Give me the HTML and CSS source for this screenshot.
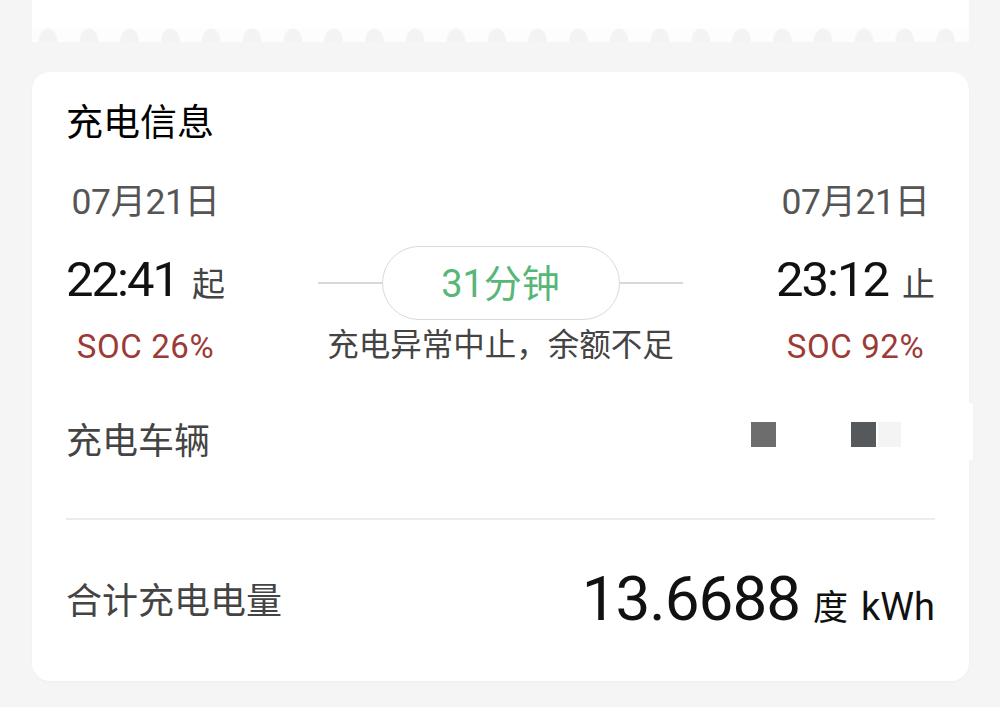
FILE: index.html
```html
<!DOCTYPE html>
<html lang="zh-CN">
<head>
<meta charset="utf-8">
<title>充电信息</title>
<link rel="stylesheet" href="styles.css">
</head>
<body>
<div class="page">
  <div class="ticket"></div>

  <section class="card">
    <h2 class="title">充电信息</h2>

    <div class="session">
      <div class="endpoint">
        <div class="date">07月21日</div>
        <div class="time">22:41<span class="tag">起</span></div>
        <div class="soc">SOC 26%</div>
      </div>

      <div class="middle">
        <div class="duration">
          <span class="rule"></span>
          <span class="pill">31分钟</span>
          <span class="rule"></span>
        </div>
        <div class="reason">充电异常中止，余额不足</div>
      </div>

      <div class="endpoint">
        <div class="date">07月21日</div>
        <div class="time">23:12<span class="tag">止</span></div>
        <div class="soc">SOC 92%</div>
      </div>
    </div>

    <div class="vehicle">
      <span class="label">充电车辆</span>
      <span class="plate">
        <span class="blk blk-a"></span>
        <span class="blk blk-b"></span>
        <span class="blk blk-c"></span>
      </span>
    </div>

    <div class="divider"></div>

    <div class="total">
      <span class="label">合计充电电量</span>
      <span class="amount"><span class="num">13.6688</span><span class="unit">度</span><span class="unit unit-en">kWh</span></span>
    </div>

    <span class="edge-tab"></span>
  </section>
</div>
</body>
</html>
```

FILE: styles.css
```css
html, body {
  margin: 0;
  padding: 0;
  background: #f5f5f5;
}

body {
  width: 1000px;
  height: 707px;
  overflow: hidden;
  font-family: Roboto, "Noto Sans CJK SC", sans-serif;
  color: #111;
}

.page {
  padding: 0 31px 0 32px;
  display: flex;
  flex-direction: column;
  gap: 30px;
}

.ticket {
  height: 42px;
  background:
    linear-gradient(#fff, #fff) top left / 100% 28px no-repeat,
    radial-gradient(ellipse 10px 14px at 50% 100%, #f3f3f3 90%, #fdfdfd 100%) -4.4px 100% / 40.8px 14px repeat-x;
}

.card {
  position: relative;
  background: #fff;
  border-radius: 18px;
  padding: 26px 34px 43px 34px;
  box-shadow: 0 1px 3px rgba(0, 0, 0, 0.03);
}

.title {
  margin: 0;
  font-size: 37px;
  line-height: 52px;
  font-weight: 400;
  color: #000;
}

.session {
  margin-top: 30px;
  display: flex;
  justify-content: space-between;
  align-items: flex-end;
}

.endpoint {
  display: flex;
  flex-direction: column;
  align-items: center;
}

.date {
  font-size: 35.5px;
  line-height: 44px;
  color: #555;
  letter-spacing: -0.5px;
}

.time {
  margin-top: 24px;
  font-size: 49px;
  line-height: 64px;
  color: #111;
  letter-spacing: -2px;
}

.tag {
  font-size: 33px;
  color: #444;
  margin-left: 14px;
  letter-spacing: 0;
}

.soc {
  margin-top: 8px;
  font-size: 33px;
  line-height: 44px;
  color: #9c3a36;
  letter-spacing: 0.6px;
}

.middle {
  width: 365px;
  display: flex;
  flex-direction: column;
  align-items: center;
  margin-bottom: 1px;
}

.duration {
  width: 100%;
  display: flex;
  align-items: center;
}

.rule {
  flex: 1;
  height: 1.5px;
  background: #d8d8d8;
}

.pill {
  box-sizing: border-box;
  width: 238px;
  height: 74px;
  padding-bottom: 5px;
  border: 1.5px solid #dadada;
  border-radius: 40px;
  display: flex;
  align-items: center;
  justify-content: center;
  font-size: 38px;
  color: #58b677;
}

.reason {
  margin-top: 4px;
  font-size: 31.5px;
  line-height: 44px;
  color: #444;
}

.vehicle {
  margin-top: 39px;
  height: 60px;
  display: flex;
  align-items: center;
}

.label {
  font-size: 36px;
  color: #444;
}

.plate {
  margin-left: auto;
  margin-right: 34px;
  display: flex;
  align-items: center;
  margin-top: -8px;
}

.blk {
  display: block;
  width: 25px;
  height: 25px;
}

.blk-a { background: #6d6d6d; margin-right: 75px; }
.blk-b { background: #56595b; }
.blk-c { background: #f4f4f4; width: 23px; margin-left: 2px; }

.divider {
  margin-top: 50px;
  height: 2px;
  background: #ececec;
}

.total {
  margin-top: 38px;
  height: 80px;
  display: flex;
  align-items: center;
  justify-content: space-between;
}

.amount {
  display: flex;
  align-items: baseline;
}

.num {
  font-size: 62px;
  letter-spacing: -1px;
  color: #111;
}

.unit {
  margin-left: 13px;
  font-size: 35px;
  color: #111;
}

.unit-en {
  font-size: 38px;
  margin-left: 13px;
}

.edge-tab {
  position: absolute;
  right: -4px;
  top: 331px;
  width: 5px;
  height: 57px;
  background: #fff;
  border-radius: 0 3px 3px 0;
}
```
